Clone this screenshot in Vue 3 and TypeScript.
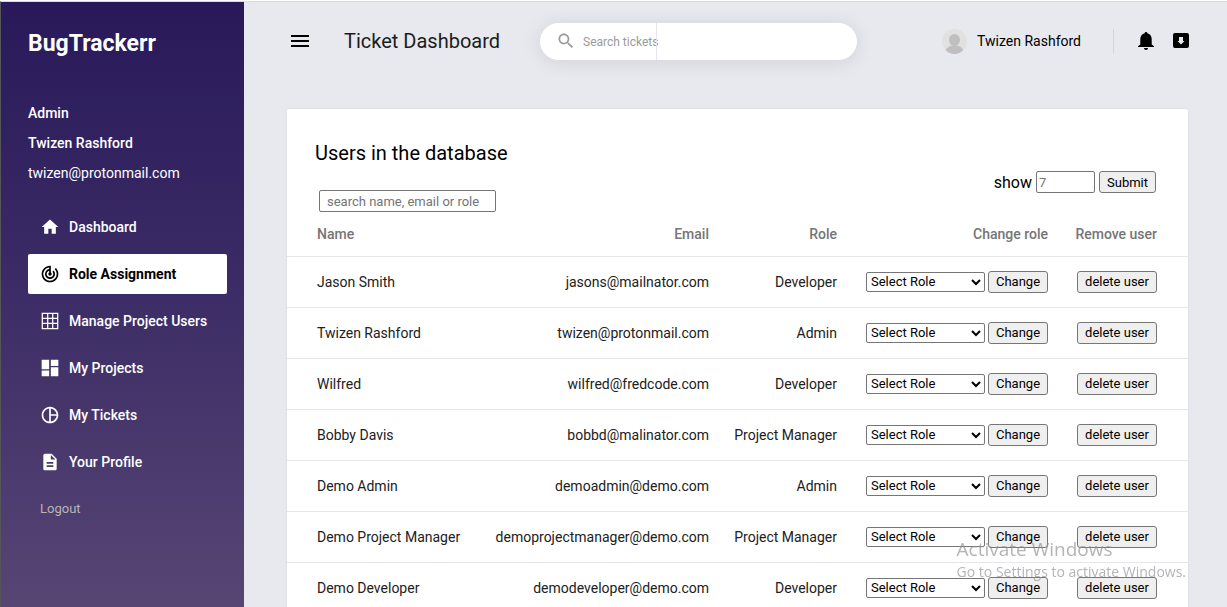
<script setup lang="ts">
import { ref } from 'vue'

interface User {
  name: string
  email: string
  role: string
}

interface NavItem {
  label: string
  icon: string
}

const navItems: NavItem[] = [
  { label: 'Dashboard', icon: 'M10 20v-6h4v6h5v-8h3L12 3 2 12h3v8z' },
  {
    label: 'Role Assignment',
    icon: 'M19.07 4.93l-1.41 1.41C19.1 7.79 20 9.79 20 12c0 4.42-3.58 8-8 8s-8-3.58-8-8c0-4.08 3.05-7.44 7-7.93v2.02C8.16 6.57 6 9.03 6 12c0 3.31 2.69 6 6 6s6-2.69 6-6c0-1.66-.67-3.16-1.76-4.24l-1.41 1.41C15.55 9.9 16 10.9 16 12c0 2.21-1.79 4-4 4s-4-1.79-4-4c0-1.86 1.28-3.41 3-3.86v2.14c-.6.35-1 .98-1 1.72 0 1.1.9 2 2 2s2-.9 2-2c0-.74-.4-1.38-1-1.72V2h-1C6.48 2 2 6.48 2 12s4.48 10 10 10 10-4.48 10-10c0-2.76-1.12-5.26-2.93-7.07z',
  },
  {
    label: 'Manage Project Users',
    icon: 'M2 2v20h20V2H2zm6.500 18.500h-5v-5h5v5zm0-6.500h-5V9.500h5V14zm0-6h-5V3.500h5V8zm6 12.500H10v-5h4.500v5zm0-6.500H10V9.500h4.500V14zm0-6H10V3.500h4.500V8zm6 12.500H16v-5h4.500v5zm0-6.500H16V9.500h4.500V14zm0-6H16V3.500h4.500V8z',
  },
  { label: 'My Projects', icon: 'M2 13.500h9V2H2v11.500zM2 22h9v-7H2v7zm11 0h9V11h-9v11zm0-20v7.500h9V2h-9z' },
  {
    label: 'My Tickets',
    icon: 'M12 2C6.480 2 2 6.480 2 12s4.480 10 10 10 10-4.480 10-10S17.520 2 12 2zm1 2.070c3.610.45 6.480 3.330 6.930 6.930H13V4.070zM4 12c0-4.060 3.070-7.440 7-7.930v15.870C7.070 19.440 4 16.060 4 12zm9 7.930V13h6.930c-.45 3.610-3.320 6.480-6.930 6.930z',
  },
  {
    label: 'Your Profile',
    icon: 'M14 2H6c-1.100 0-2 .9-2 2v16c0 1.100.89 2 2 2h12c1.100 0 2-.9 2-2V8l-6-6zm2 16H8v-2h8v2zm0-4H8v-2h8v2zm-3-5V3.500L18.500 9H13z',
  },
]

const activeItem = ref('Role Assignment')

const users: User[] = [
  { name: 'Jason Smith', email: 'jasons@mailnator.com', role: 'Developer' },
  { name: 'Twizen Rashford', email: 'twizen@protonmail.com', role: 'Admin' },
  { name: 'Wilfred', email: 'wilfred@fredcode.com', role: 'Developer' },
  { name: 'Bobby Davis', email: 'bobbd@malinator.com', role: 'Project Manager' },
  { name: 'Demo Admin', email: 'demoadmin@demo.com', role: 'Admin' },
  { name: 'Demo Project Manager', email: 'demoprojectmanager@demo.com', role: 'Project Manager' },
  { name: 'Demo Developer', email: 'demodeveloper@demo.com', role: 'Developer' },
]
</script>

<template>
  <div class="shell">
    <aside class="sidebar">
      <h1 class="brand">BugTrackerr</h1>
      <div class="account">
        <span class="medium">Admin</span>
        <span class="medium">Twizen Rashford</span>
        <span>twizen@protonmail.com</span>
      </div>
      <nav class="nav">
        <a
          v-for="item in navItems"
          :key="item.label"
          href="#"
          class="nav-item"
          :class="{ active: item.label === activeItem }"
          @click.prevent="activeItem = item.label"
        >
          <svg class="nav-icon" viewBox="0 0 24 24" aria-hidden="true"><path :d="item.icon" /></svg>
          <span>{{ item.label }}</span>
        </a>
      </nav>
      <button class="logout" type="button">Logout</button>
    </aside>

    <div class="main">
      <header class="topbar">
        <button class="icon-button" type="button" aria-label="Toggle menu">
          <svg class="menu-icon" viewBox="0 0 18 12"><path d="M0 0h18v2H0zM0 5h18v2H0zM0 10h18v2H0z" /></svg>
        </button>
        <h2 class="page-title">Ticket Dashboard</h2>
        <label class="search">
          <svg class="search-icon" viewBox="0 0 24 24" aria-hidden="true">
            <path d="M15.500 14h-.79l-.28-.27C15.410 12.590 16 11.110 16 9.500 16 5.910 13.090 3 9.500 3S3 5.910 3 9.500 5.910 16 9.500 16c1.610 0 3.090-.59 4.230-1.570l.27.28v.79l5 4.990L20.490 19l-4.990-5zm-6 0C7.010 14 5 11.990 5 9.500S7.010 5 9.500 5 14 7.010 14 9.500 11.990 14 9.500 14z" />
          </svg>
          <input class="search-input" type="text" placeholder="Search tickets" aria-label="Search tickets" />
          <span class="search-rule"></span>
        </label>
        <div class="profile">
          <svg class="avatar" viewBox="0 0 25 25" aria-hidden="true">
            <defs><clipPath id="avatar-clip"><circle cx="12.500" cy="12.500" r="12.500" /></clipPath></defs>
            <g clip-path="url(#avatar-clip)">
              <path fill="#e1e1e1" d="M0 0h25v25H0z" />
              <ellipse fill="#bfbfbf" cx="12.500" cy="11" rx="5.500" ry="6" />
              <path fill="#bfbfbf" d="M3 25c0-6 4-8.500 9.500-8.500S22 19 22 25z" />
            </g>
          </svg>
          <span>Twizen Rashford</span>
        </div>
        <div class="actions">
          <button class="icon-button" type="button" aria-label="Notifications">
            <svg class="bell" viewBox="0 0 16 18">
              <path d="M8 0c1 0 1.300.7 1.300 1.300C12 2 13.700 4.300 13.700 7v5.500L16 14.200V15H0v-.8l2.300-1.700V7C2.300 4.300 4 2 6.700 1.300 6.700.7 7 0 8 0zM6 16h4c0 1-.9 2-2 2s-2-1-2-2z" />
            </svg>
          </button>
          <button class="icon-button" type="button" aria-label="Archive">
            <svg class="archive" viewBox="0 0 16 16">
              <path fill-rule="evenodd" d="M2 0h12a2 2 0 0 1 2 2v11a2 2 0 0 1-2 2H2a2 2 0 0 1-2-2V2a2 2 0 0 1 2-2zM6 4v4H4.500L8 11.500 11.500 8H10V4z" />
            </svg>
          </button>
        </div>
      </header>

      <section class="card">
        <h3 class="card-title">Users in the database</h3>
        <div class="tools">
          <input class="field filter" type="text" placeholder="search name, email or role" aria-label="Filter users" />
          <form class="show" @submit.prevent>
            <label for="show-count">show</label>
            <input id="show-count" class="field count" type="text" placeholder="7" />
            <button class="button" type="submit">Submit</button>
          </form>
        </div>
        <table class="users">
          <colgroup>
            <col />
            <col class="col-email" />
            <col class="col-role" />
            <col class="col-change" />
            <col class="col-remove" />
          </colgroup>
          <thead>
            <tr>
              <th>Name</th>
              <th>Email</th>
              <th>Role</th>
              <th>Change role</th>
              <th>Remove user</th>
            </tr>
          </thead>
          <tbody>
            <tr v-for="user in users" :key="user.email">
              <td>{{ user.name }}</td>
              <td>{{ user.email }}</td>
              <td>{{ user.role }}</td>
              <td>
                <div class="change">
                  <select class="select" :aria-label="`Role for ${user.name}`">
                    <option>Select Role</option>
                    <option>Admin</option>
                    <option>Project Manager</option>
                    <option>Developer</option>
                  </select>
                  <button class="button" type="button">Change</button>
                </div>
              </td>
              <td><button class="button delete" type="button">delete user</button></td>
            </tr>
          </tbody>
        </table>
      </section>
    </div>

    <div class="watermark">
      <div class="watermark-title">Activate Windows</div>
      <div class="watermark-text">Go to Settings to activate Windows.</div>
    </div>
  </div>
</template>

<style>
body {
  margin: 0;
  background: #e8e9ee;
}
</style>

<style scoped>
* {
  box-sizing: border-box;
}
.shell {
  display: flex;
  height: 100vh;
  overflow: hidden;
  padding-top: 1px;
  background: #fff;
  color: #000;
  font-family: Roboto, "Liberation Sans", sans-serif;
  font-size: 14px;
}
button,
input,
select {
  margin: 0;
  font-family: inherit;
}
h1,
h2,
h3 {
  margin: 0;
}
.sidebar {
  flex: 0 0 244px;
  display: flex;
  flex-direction: column;
  align-items: flex-start;
  padding: 26px 17px 0 27px;
  border-top: 1px solid #d8dade;
  border-left: 1px solid #55555a;
  background: linear-gradient(#29195a, #3a2b65 45%, #574574);
  color: #fff;
}
.brand {
  font-size: 23px;
  line-height: 32px;
  font-weight: 700;
}
.account {
  display: flex;
  flex-direction: column;
  margin-top: 38px;
  line-height: 30px;
}
.medium {
  font-weight: 500;
}
.nav {
  display: flex;
  flex-direction: column;
  align-self: stretch;
  gap: 7px;
  margin-top: 19px;
}
.nav-item {
  display: flex;
  align-items: center;
  gap: 9px;
  height: 40px;
  padding: 0 12px;
  border-radius: 2px;
  color: #fff;
  font-size: 14px;
  font-weight: 500;
  text-decoration: none;
  white-space: nowrap;
}
.nav-item.active {
  background: #fff;
  color: #000;
  font-weight: 700;
}
.nav-icon {
  flex: none;
  width: 20px;
  height: 20px;
  fill: currentColor;
}
.logout {
  margin: 17px 0 0 12px;
  padding: 0;
  border: 0;
  background: none;
  color: #b9b3b5;
  font-size: 13px;
  line-height: 20px;
}
.main {
  flex: 1;
  min-width: 0;
  border-top: 1px solid #d8dade;
  background: #e8e9ee;
}
.topbar {
  display: flex;
  align-items: center;
  height: 78px;
  padding: 0 38px 0 47px;
}
.icon-button {
  display: flex;
  padding: 0;
  border: 0;
  background: none;
}
.menu-icon {
  width: 18px;
  height: 12px;
}
.page-title {
  width: 196px;
  margin-left: 35px;
  color: #1c1c1c;
  font-size: 20px;
  line-height: 28px;
  font-weight: 400;
  white-space: nowrap;
}
.search {
  position: relative;
  display: flex;
  align-items: center;
  width: 317px;
  height: 37px;
  padding: 0 16px;
  border-radius: 19px;
  background: #fff;
  box-shadow: 0 2px 20px rgba(0, 0, 0, 0.1);
}
.search-icon {
  flex: none;
  width: 20px;
  height: 20px;
  fill: #9a9a9a;
}
.search-input {
  flex: 1;
  min-width: 0;
  margin-left: 7px;
  padding: 2px 0 0;
  border: 0;
  outline: 0;
  background: none;
  font-size: 12px;
}
.search-input::placeholder {
  color: #9a9a9a;
}
.search-rule {
  position: absolute;
  top: 0;
  bottom: 0;
  left: 116px;
  width: 1px;
  background: #e4e4ea;
}
.profile {
  display: flex;
  align-items: center;
  gap: 10px;
  margin-left: auto;
  padding-right: 32px;
  white-space: nowrap;
}
.avatar {
  width: 25px;
  height: 25px;
}
.actions {
  display: flex;
  align-items: center;
  gap: 19px;
  height: 25px;
  padding-left: 24px;
  border-left: 1px solid #d5d6dc;
}
.bell {
  width: 16px;
  height: 18px;
}
.archive {
  width: 16px;
  height: 16px;
}
.card {
  margin: 29px 39px 0 43px;
  padding-top: 30px;
  border-radius: 2px;
  background: #fff;
  box-shadow: 0 0 3px rgba(0, 0, 0, 0.08);
}
.card-title {
  padding-left: 28px;
  font-size: 20px;
  line-height: 28px;
  font-weight: 400;
}
.tools {
  display: flex;
  justify-content: space-between;
  align-items: flex-start;
  padding: 4px 32px 0;
}
.field {
  height: 22px;
  border: 1px solid #767676;
  border-radius: 2px;
  background: #fff;
  font-size: 13px;
}
.field::placeholder {
  color: #757575;
}
.filter {
  width: 177px;
  margin-top: 19px;
  padding: 1px 7px;
}
.show {
  display: flex;
  align-items: center;
  gap: 4px;
  font-size: 16px;
}
.count {
  width: 59px;
  padding: 1px 2px;
}
.button {
  height: 22px;
  padding: 0 7px;
  border: 1px solid #767676;
  border-radius: 3px;
  background: #efefef;
  color: #000;
  font-size: 13px;
  white-space: nowrap;
}
.users {
  width: 100%;
  border-collapse: collapse;
  table-layout: fixed;
}
.col-email {
  width: 240px;
}
.col-role {
  width: 128px;
}
.col-change {
  width: 211px;
}
.col-remove {
  width: 127px;
}
.users th,
.users td {
  padding: 0 13px 0 0;
  border-bottom: 1px solid #e6e7ec;
  text-align: right;
  white-space: nowrap;
}
.users th {
  height: 44px;
  color: #757575;
  font-weight: 500;
}
.users td {
  height: 51px;
  color: #212121;
}
.users th:first-child,
.users td:first-child {
  padding-left: 30px;
  text-align: left;
}
.users th:last-child,
.users td:last-child {
  padding-right: 31px;
}
.change {
  display: flex;
  justify-content: flex-end;
  align-items: center;
  gap: 3px;
}
.change .button {
  width: 60px;
}
.delete {
  width: 80px;
}
.select {
  width: 119px;
  height: 20px;
  border: 1px solid #767676;
  border-radius: 2px;
  background: #fff;
  color: #000;
  font-size: 13px;
}
.watermark {
  position: fixed;
  right: 41px;
  bottom: 24px;
  color: rgba(140, 140, 140, 0.65);
  font-family: "Open Sans", "Noto Sans", sans-serif;
  white-space: nowrap;
  pointer-events: none;
}
.watermark-title {
  font-size: 19px;
  line-height: 24px;
}
.watermark-text {
  font-size: 14px;
  line-height: 22px;
}
</style>
